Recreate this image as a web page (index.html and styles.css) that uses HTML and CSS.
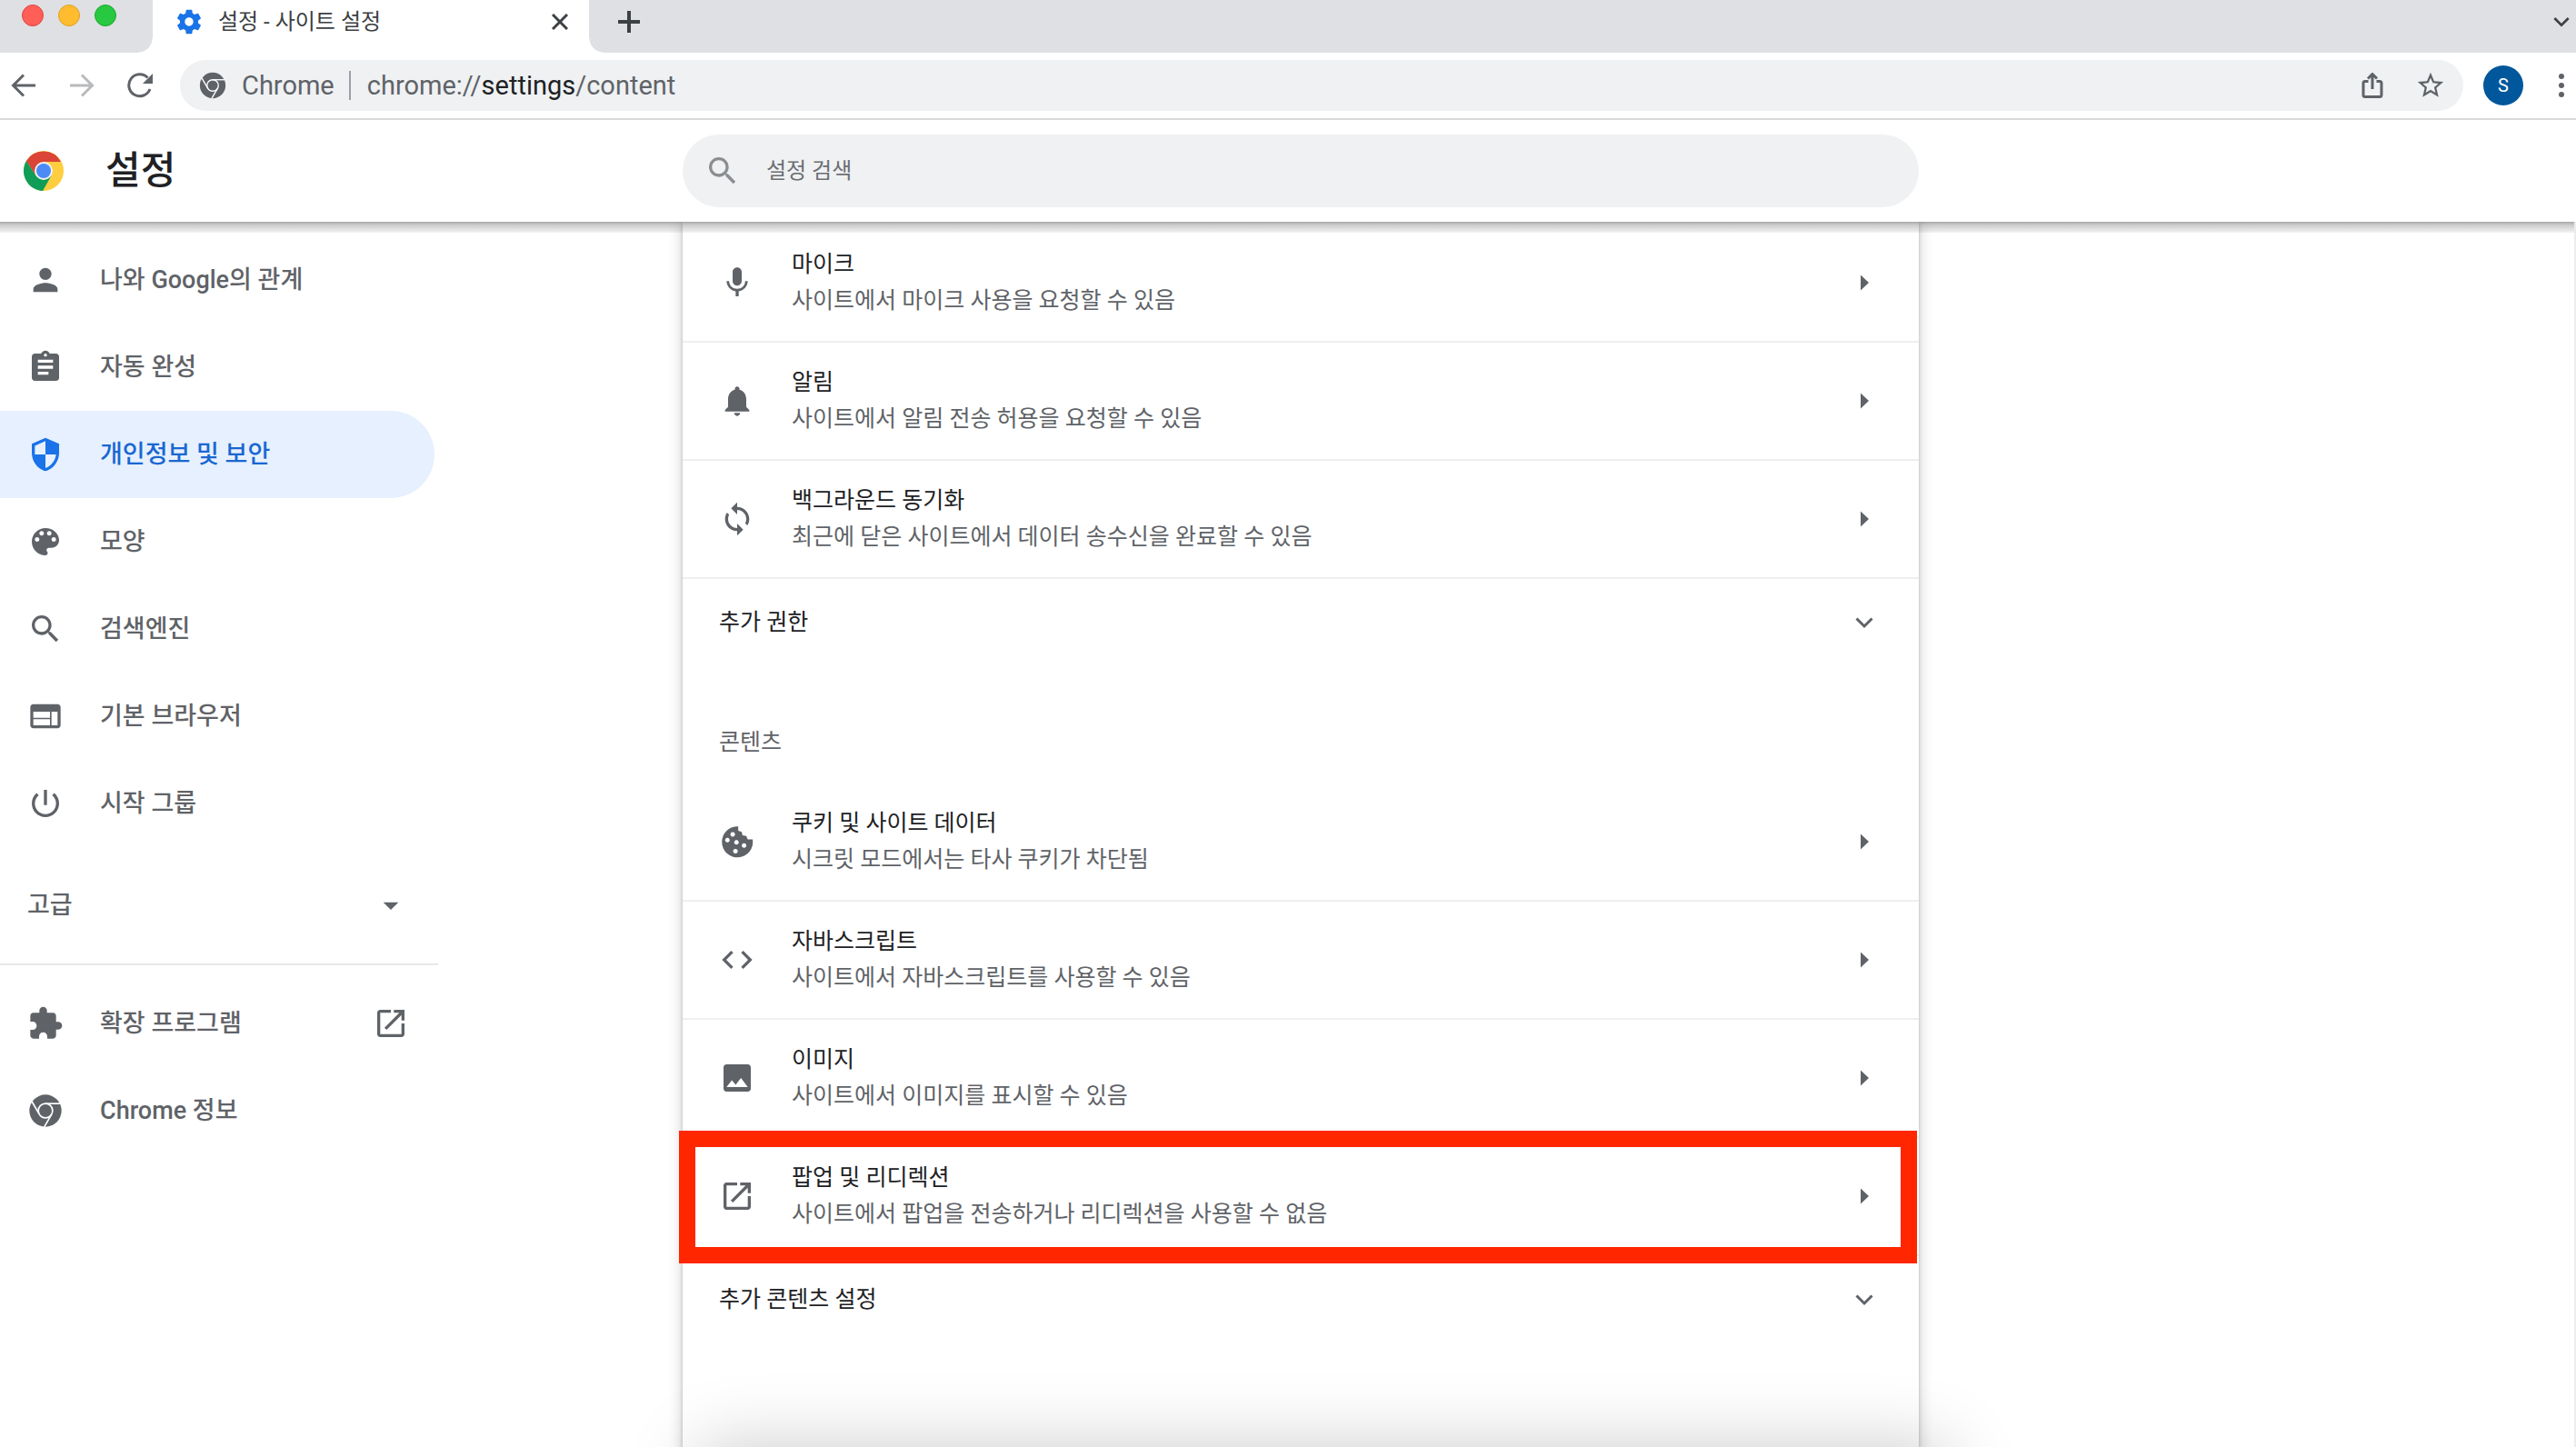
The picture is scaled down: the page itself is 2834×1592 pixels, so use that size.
FILE: index.html
```html
<!DOCTYPE html>
<html lang="ko">
<head>
<meta charset="utf-8">
<title>설정 - 사이트 설정</title>
<meta name="viewport" content="width=device-width, initial-scale=1">
<link rel="stylesheet" href="styles.css">
</head>
<body>
<svg class="sprite" aria-hidden="true">
  <symbol id="search" viewBox="0 0 24 24"><path d="M15.5 14h-.79l-.28-.27C15.41 12.59 16 11.11 16 9.5 16 5.91 13.09 3 9.5 3S3 5.91 3 9.5 5.91 16 9.5 16c1.61 0 3.09-.59 4.23-1.57l.27.28v.79l5 4.99L20.49 19l-4.99-5zm-6 0C7.01 14 5 11.99 5 9.5S7.01 5 9.5 5 14 7.01 14 9.5 11.99 14 9.5 14z"/></symbol>
  <symbol id="open" viewBox="0 0 24 24"><path d="M19 19H5V5h7V3H5c-1.11 0-2 .9-2 2v14c0 1.1.89 2 2 2h14c1.1 0 2-.9 2-2v-7h-2v7zM14 3v2h3.59l-9.83 9.83 1.41 1.41L19 6.41V10h2V3h-7z"/></symbol>
  <symbol id="chrome" viewBox="0 0 24 24">
    <circle cx="12" cy="12" r="10.6"/>
    <g fill="none" stroke="#fff" stroke-width="1">
      <circle cx="12" cy="12" r="4.7"/>
      <path d="M12 7.3h9.8"/>
      <path d="M12 7.3h9.8" transform="rotate(120 12 12)"/>
      <path d="M12 7.3h9.8" transform="rotate(240 12 12)"/>
    </g>
  </symbol>
  <symbol id="arrow" viewBox="0 0 20 20"><path d="M6 1.5v17l9-8.5z"/></symbol>
  <symbol id="chevron" viewBox="0 0 20 20"><path d="M1.5 5.5l8.5 8.5l8.5-8.5" fill="none" stroke="currentColor" stroke-width="3"/></symbol>
</svg>

<header class="browser">
  <div class="tabstrip">
    <div class="window-controls">
      <button class="light light-close" aria-label="닫기"></button>
      <button class="light light-min" aria-label="최소화"></button>
      <button class="light light-max" aria-label="최대화"></button>
    </div>
    <div class="tab">
      <svg class="tab-icon" viewBox="0 0 24 24"><path d="M19.43 12.98c.04-.32.07-.64.07-.98s-.03-.66-.07-.98l2.11-1.65c.19-.15.24-.42.12-.64l-2-3.46c-.12-.22-.39-.3-.61-.22l-2.49 1c-.52-.4-1.08-.73-1.69-.98l-.38-2.65C14.46 2.18 14.25 2 14 2h-4c-.25 0-.46.18-.49.42l-.38 2.65c-.61.25-1.17.59-1.69.98l-2.49-1c-.23-.09-.49 0-.61.22l-2 3.46c-.13.22-.07.49.12.64l2.11 1.65c-.04.32-.07.65-.07.98s.03.66.07.98l-2.11 1.65c-.19.15-.24.42-.12.64l2 3.46c.12.22.39.3.61.22l2.49-1c.52.4 1.08.73 1.69.98l.38 2.65c.03.24.24.42.49.42h4c.25 0 .46-.18.49-.42l.38-2.65c.61-.25 1.17-.59 1.69-.98l2.49 1c.23.09.49 0 .61-.22l2-3.46c.12-.22.07-.49-.12-.64l-2.11-1.65zM12 15.5c-1.93 0-3.5-1.57-3.5-3.5s1.57-3.5 3.5-3.5 3.5 1.57 3.5 3.5-1.57 3.5-3.5 3.5z"/></svg>
      <span class="tab-title">설정 - 사이트 설정</span>
      <button class="icon-button" aria-label="탭 닫기"><svg class="icon-s" viewBox="0 0 18 18"><path class="line" d="M1 1l16 16M17 1L1 17"/></svg></button>
    </div>
    <button class="icon-button new-tab" aria-label="새 탭"><svg class="icon-m" viewBox="0 0 24 24"><path class="line bold" d="M12 0v24M0 12h24"/></svg></button>
    <button class="icon-button tab-search" aria-label="탭 검색"><svg class="icon-s"><use href="#chevron"/></svg></button>
  </div>
  <div class="toolbar">
    <div class="nav-buttons">
      <button class="icon-button" aria-label="뒤로"><svg class="icon-l" viewBox="0 0 28 28"><path class="line" d="M27 14H3M14 2.5L2.5 14L14 25.5"/></svg></button>
      <button class="icon-button faded" aria-label="앞으로"><svg class="icon-l" viewBox="0 0 28 28"><path class="line" d="M1 14h24M14 2.5L25.5 14L14 25.5"/></svg></button>
      <button class="icon-button" aria-label="새로고침"><svg class="icon-l" viewBox="0 0 28 28"><path class="line" d="M25 18A12 12 0 1 1 22.5 5.5"/><path d="M28 1v11H17z"/></svg></button>
    </div>
    <div class="omnibox">
      <svg class="icon-xl"><use href="#chrome"/></svg>
      <span class="site-name">Chrome</span>
      <span class="url">chrome://<b>settings</b>/content</span>
      <button class="icon-button share" aria-label="공유"><svg class="icon-l" viewBox="0 0 28 28"><path class="line" d="M9.5 9.5H6Q4 9.5 4 11.5V24.5Q4 26.5 6 26.5H22Q24 26.5 24 24.5V11.5Q24 9.5 22 9.5H18.5M14 18V1.5M9 6.5l5-5l5 5"/></svg></button>
      <button class="icon-button" aria-label="북마크"><svg class="icon-star" viewBox="0 0 24 24"><path d="M22 9.24l-7.19-.62L12 2 9.19 8.63 2 9.24l5.46 4.73L5.82 21 12 17.27 18.18 21l-1.63-7.03L22 9.24zM12 15.4l-3.76 2.27 1-4.28-3.32-2.88 4.38-.38L12 6.1l1.71 4.04 4.38.38-3.32 2.88 1 4.28L12 15.4z"/></svg></button>
    </div>
    <button class="avatar">S</button>
    <button class="icon-button" aria-label="메뉴"><svg class="icon-l" viewBox="0 0 28 28"><circle cx="14" cy="4" r="3"/><circle cx="14" cy="14" r="3"/><circle cx="14" cy="24" r="3"/></svg></button>
  </div>
</header>

<div class="page-header">
  <div class="brand">
    <svg class="logo" viewBox="0 0 44 44">
      <circle cx="22" cy="22" r="22" fill="#ffcd40"/>
      <path fill="#db4437" d="M2.95 11A22 22 0 0 1 41.05 12H22L13.34 27Z"/>
      <path fill="#0f9d58" d="M2.95 11A22 22 0 0 0 21 44L30.66 27L22 32L13.34 27L2.95 11Z"/>
      <circle cx="22" cy="22" r="10" fill="#f1f1f1"/>
      <circle cx="22" cy="22" r="8" fill="#4c8bf5"/>
    </svg>
    <h1>설정</h1>
  </div>
  <label class="search">
    <svg class="icon-2x"><use href="#search"/></svg>
    <input type="search" placeholder="설정 검색" aria-label="설정 검색">
  </label>
</div>

<div class="page">
  <nav class="sidebar">
    <a class="nav-item" href="#people"><svg class="icon-2x" viewBox="0 0 24 24"><path d="M12 12c2.21 0 4-1.79 4-4s-1.79-4-4-4-4 1.79-4 4 1.79 4 4 4zm0 2c-2.67 0-8 1.34-8 4v2h16v-2c0-2.66-5.33-4-8-4z"/></svg>나와 Google의 관계</a>
    <a class="nav-item" href="#autofill"><svg class="icon-2x" viewBox="0 0 24 24"><path d="M19 3h-4.18C14.4 1.84 13.3 1 12 1c-1.3 0-2.4.84-2.82 2H5c-1.1 0-2 .9-2 2v14c0 1.1.9 2 2 2h14c1.1 0 2-.9 2-2V5c0-1.1-.9-2-2-2zm-7 0c.55 0 1 .45 1 1s-.45 1-1 1-1-.45-1-1 .45-1 1-1zm2 14H7v-2h7v2zm3-4H7v-2h10v2zm0-4H7V7h10v2z"/></svg>자동 완성</a>
    <a class="nav-item active" href="#privacy" aria-current="page"><svg class="icon-2x" viewBox="0 0 24 24"><path d="M12 1L3 5v6c0 5.55 3.84 10.74 9 12 5.16-1.26 9-6.45 9-12V5l-9-4zm0 10.99h7c-.53 4.12-3.28 7.79-7 8.94V12H5V6.3l7-3.11v8.8z"/></svg>개인정보 및 보안</a>
    <a class="nav-item" href="#appearance"><svg class="icon-2x" viewBox="0 0 24 24"><path d="M12 3c-4.97 0-9 4.03-9 9s4.03 9 9 9c.83 0 1.5-.67 1.5-1.5 0-.39-.15-.74-.39-1.01-.23-.26-.38-.61-.38-.99 0-.83.67-1.5 1.5-1.5H16c2.76 0 5-2.24 5-5 0-4.42-4.03-8-9-8zm-5.5 9c-.83 0-1.5-.67-1.5-1.5S5.67 9 6.5 9 8 9.67 8 10.5 7.33 12 6.5 12zm3-4C8.67 8 8 7.33 8 6.5S8.67 5 9.5 5s1.5.67 1.5 1.5S10.33 8 9.5 8zm5 0c-.83 0-1.5-.67-1.5-1.5S13.67 5 14.5 5s1.5.67 1.5 1.5S15.33 8 14.5 8zm3 4c-.83 0-1.5-.67-1.5-1.5S16.67 9 17.5 9s1.5.67 1.5 1.5-.67 1.5-1.5 1.5z"/></svg>모양</a>
    <a class="nav-item" href="#search-engine"><svg class="icon-2x"><use href="#search"/></svg>검색엔진</a>
    <a class="nav-item" href="#default-browser"><svg class="icon-2x" viewBox="0 0 24 24"><path d="M20 4H4c-1.1 0-1.99.9-1.99 2L2 18c0 1.1.9 2 2 2h16c1.1 0 2-.9 2-2V6c0-1.1-.9-2-2-2zm-5 14H4v-4h11v4zm0-5H4V9h11v4zm5 5h-4V9h4v9z"/></svg>기본 브라우저</a>
    <a class="nav-item" href="#on-startup"><svg class="icon-2x" viewBox="0 0 24 24"><path d="M13 3h-2v10h2V3zm4.83 2.17l-1.42 1.42C17.99 7.86 19 9.81 19 12c0 3.87-3.13 7-7 7s-7-3.13-7-7c0-2.19 1.01-4.14 2.58-5.42L6.17 5.17C4.23 6.82 3 9.26 3 12c0 4.97 4.03 9 9 9s9-4.03 9-9c0-2.74-1.23-5.18-3.17-6.83z"/></svg>시작 그룹</a>
    <button class="advanced">고급<svg class="icon-2x" viewBox="0 0 24 24"><path d="M7 10l5 5 5-5z"/></svg></button>
    <a class="nav-item" href="#extensions"><svg class="icon-2x" viewBox="0 0 24 24"><path d="M20.5 11H19V7c0-1.1-.9-2-2-2h-4V3.5C13 2.12 11.88 1 10.5 1S8 2.12 8 3.5V5H4c-1.1 0-1.99.9-1.99 2v3.8H3.5c1.49 0 2.7 1.21 2.7 2.7s-1.21 2.7-2.7 2.7H2V20c0 1.1.9 2 2 2h3.8v-1.5c0-1.49 1.21-2.7 2.7-2.7 1.49 0 2.7 1.21 2.7 2.7V22H17c1.1 0 2-.9 2-2v-4h1.5c1.38 0 2.5-1.12 2.5-2.5S21.88 11 20.5 11z"/></svg>확장 프로그램<svg class="icon-2x trailing"><use href="#open"/></svg></a>
    <a class="nav-item" href="#help"><svg class="icon-2x"><use href="#chrome"/></svg>Chrome 정보</a>
  </nav>

  <main class="card">
    <a class="row" href="#microphone">
      <svg class="icon-2x" viewBox="0 0 24 24"><path d="M12 14c1.66 0 2.99-1.34 2.99-3L15 5c0-1.66-1.34-3-3-3S9 3.34 9 5v6c0 1.66 1.34 3 3 3zm5.3-3c0 3-2.54 5.1-5.3 5.1S6.7 14 6.7 11H5c0 3.41 2.72 6.23 6 6.72V21h2v-3.28c3.28-.48 6-3.3 6-6.72h-1.7z"/></svg>
      <span class="row-text"><span class="row-title">마이크</span><span class="row-desc">사이트에서 마이크 사용을 요청할 수 있음</span></span>
      <svg class="row-end"><use href="#arrow"/></svg>
    </a>
    <a class="row" href="#notifications">
      <svg class="icon-2x" viewBox="0 0 24 24"><path d="M12 22c1.1 0 2-.9 2-2h-4c0 1.1.89 2 2 2zm6-6v-5c0-3.07-1.64-5.64-4.5-6.32V4c0-.83-.67-1.5-1.5-1.5s-1.5.67-1.5 1.5v.68C7.63 5.36 6 7.92 6 11v5l-2 2v1h16v-1l-2-2z"/></svg>
      <span class="row-text"><span class="row-title">알림</span><span class="row-desc">사이트에서 알림 전송 허용을 요청할 수 있음</span></span>
      <svg class="row-end"><use href="#arrow"/></svg>
    </a>
    <a class="row" href="#background-sync">
      <svg class="icon-2x" viewBox="0 0 24 24"><path d="M12 4V1L8 5l4 4V6c3.31 0 6 2.69 6 6 0 1.01-.25 1.97-.7 2.8l1.46 1.46C19.54 15.03 20 13.57 20 12c0-4.42-3.58-8-8-8zm0 14c-3.31 0-6-2.69-6-6 0-1.01.25-1.97.7-2.8L5.24 7.74C4.46 8.97 4 10.43 4 12c0 4.42 3.58 8 8 8v3l4-4-4-4v3z"/></svg>
      <span class="row-text"><span class="row-title">백그라운드 동기화</span><span class="row-desc">최근에 닫은 사이트에서 데이터 송수신을 완료할 수 있음</span></span>
      <svg class="row-end"><use href="#arrow"/></svg>
    </a>
    <button class="expander">추가 권한<svg class="row-end"><use href="#chevron"/></svg></button>

    <h2>콘텐츠</h2>
    <a class="row" href="#cookies">
      <svg class="icon-2x" viewBox="0 0 24 24"><path fill-rule="evenodd" d="M22.2 10.5A10.2 10.2 0 1 1 12.7 2V4.8L15 5.5L15.5 7.8L18 8.2L19 10.5zM9 5.7a1.5 1.5 0 1 0 .1 0zM5.5 9.5a1.5 1.5 0 1 0 .1 0zM11.5 11a1.5 1.5 0 1 0 .1 0zM16.5 13a1.5 1.5 0 1 0 .1 0zM10.8 16.8a1.5 1.5 0 1 0 .1 0z"/></svg>
      <span class="row-text"><span class="row-title">쿠키 및 사이트 데이터</span><span class="row-desc">시크릿 모드에서는 타사 쿠키가 차단됨</span></span>
      <svg class="row-end"><use href="#arrow"/></svg>
    </a>
    <a class="row" href="#javascript">
      <svg class="icon-2x" viewBox="0 0 24 24"><path d="M9.4 16.6L4.8 12l4.6-4.6L8 6l-6 6 6 6 1.4-1.4zm5.2 0l4.6-4.6-4.6-4.6L16 6l6 6-6 6-1.4-1.4z"/></svg>
      <span class="row-text"><span class="row-title">자바스크립트</span><span class="row-desc">사이트에서 자바스크립트를 사용할 수 있음</span></span>
      <svg class="row-end"><use href="#arrow"/></svg>
    </a>
    <a class="row" href="#images">
      <svg class="icon-2x" viewBox="0 0 24 24"><path d="M21 19V5c0-1.1-.9-2-2-2H5c-1.1 0-2 .9-2 2v14c0 1.1.9 2 2 2h14c1.1 0 2-.9 2-2zM8.5 13.5l2.5 3.01L14.5 12l4.5 6H5l3.5-4.5z"/></svg>
      <span class="row-text"><span class="row-title">이미지</span><span class="row-desc">사이트에서 이미지를 표시할 수 있음</span></span>
      <svg class="row-end"><use href="#arrow"/></svg>
    </a>
    <a class="row highlighted" href="#popups">
      <svg class="icon-2x"><use href="#open"/></svg>
      <span class="row-text"><span class="row-title">팝업 및 리디렉션</span><span class="row-desc">사이트에서 팝업을 전송하거나 리디렉션을 사용할 수 없음</span></span>
      <svg class="row-end"><use href="#arrow"/></svg>
    </a>
    <button class="expander">추가 콘텐츠 설정<svg class="row-end"><use href="#chevron"/></svg></button>
  </main>
</div>
</body>
</html>
```
FILE: styles.css
```css
:root {
  --ink: #202124;
  --muted: #5f6368;
  --field: #eff1f3;
  --rule: #efefef;
  --gutter: 751px;
}

* { box-sizing: border-box; }

body {
  display: flex;
  flex-direction: column;
  min-height: 100vh;
  margin: 0;
  background: #fff;
  color: var(--ink);
  font-family: Roboto, "Noto Sans CJK KR", sans-serif;
  font-size: 24px;
  line-height: 40px;
}

button, input { font: inherit; color: inherit; border: 0; background: none; padding: 0; margin: 0; }
a { color: inherit; text-decoration: none; }
svg { display: block; flex: none; fill: currentColor; }
.sprite { position: absolute; width: 0; height: 0; }
.line { fill: none; stroke: currentColor; stroke-width: 3; }
.bold { stroke-width: 4; }

.icon-s { width: 18px; height: 18px; }
.icon-m { width: 24px; height: 24px; }
.icon-l { width: 28px; height: 28px; }
.icon-xl { width: 32px; height: 32px; }
.icon-star { width: 34px; height: 34px; }
.icon-2x { width: 40px; height: 40px; }
.icon-button { display: flex; align-items: center; justify-content: center; }

/* Browser window */
.tabstrip {
  display: flex;
  height: 58px;
  padding-right: 7px;
  background: #dee0e4;
  color: #3c4043;
}
.window-controls { display: flex; gap: 16px; width: 168px; padding: 5px 0 0 24px; }
.light { width: 24px; height: 24px; border-radius: 50%; }
.light-close { background: #ff5f57; border: 1px solid #e0443e; }
.light-min { background: #febc2e; border: 1px solid #dfa023; }
.light-max { background: #28c840; border: 1px solid #1aab29; }

.tab {
  position: relative;
  display: flex;
  align-items: center;
  width: 480px;
  padding: 0 23px 10px 24px;
  background: #fff;
}
.tab::before, .tab::after {
  content: "";
  position: absolute;
  bottom: 0;
  width: 16px;
  height: 16px;
}
.tab::before { right: 100%; background: radial-gradient(circle at 0 0, transparent 15px, #fff 16px); }
.tab::after { left: 100%; background: radial-gradient(circle at 100% 0, transparent 15px, #fff 16px); }
.tab-icon { width: 32px; height: 32px; color: #1a73e8; }
.tab-title { flex: 1; padding-left: 16px; }
.new-tab { width: 88px; padding-bottom: 10px; }
.tab-search { margin-left: auto; padding-bottom: 10px; }

.toolbar {
  display: flex;
  align-items: center;
  height: 74px;
  padding: 0 2px 0 12px;
  border-bottom: 2px solid #dadada;
  color: var(--muted);
}
.nav-buttons { display: flex; gap: 36px; width: 186px; }
.faded { color: #b8babd; }
.omnibox {
  flex: 1;
  display: flex;
  align-items: center;
  height: 56px;
  padding: 0 19px 0 20px;
  border-radius: 28px;
  background: var(--field);
  font-size: 29px;
}
.site-name { margin-left: 16px; padding-right: 16px; border-right: 2px solid #9aa0a6; line-height: 32px; }
.url { flex: 1; padding-left: 18px; }
.url b { color: var(--ink); font-weight: 400; }
.share { margin-right: 33px; }
.avatar {
  width: 44px;
  height: 44px;
  margin: 0 28px 0 22px;
  border-radius: 50%;
  background: #01579b;
  color: #fff;
  font-size: 20px;
}

/* Settings header */
.page-header {
  position: relative;
  display: grid;
  grid-template-columns: var(--gutter) minmax(0, 1360px) 1fr;
  align-items: center;
  height: 112px;
}
.page-header::after {
  content: "";
  position: absolute;
  z-index: 1;
  top: 100%;
  left: 0;
  right: 2px;
  height: 12px;
  background: linear-gradient(rgba(0, 0, 0, 0.34), rgba(0, 0, 0, 0.2) 30%, rgba(0, 0, 0, 0.05));
}
.brand { display: flex; align-items: center; gap: 46px; padding-left: 26px; }
.logo { width: 44px; height: 44px; }
h1 { margin: 0; font-size: 42px; font-weight: 500; }
.search {
  display: flex;
  align-items: center;
  gap: 28px;
  height: 80px;
  padding: 0 24px;
  border-radius: 40px;
  background: var(--field);
  color: #8b8e91;
}
.search input { flex: 1; outline: 0; }
.search input::placeholder { color: #6b6e72; opacity: 1; }

/* Body columns */
.page {
  position: relative;
  flex: 1;
  display: grid;
  grid-template-columns: var(--gutter) minmax(0, 1360px) 1fr;
  border-right: 2px solid #ececec;
  overflow: hidden;
}
.page::after {
  content: "";
  position: absolute;
  top: 100%;
  left: 770px;
  right: 690px;
  height: 100px;
  box-shadow: 0 0 80px rgba(0, 0, 0, 0.21);
  pointer-events: none;
}

.sidebar { width: 482px; padding-top: 16px; color: var(--muted); font-size: 27px; font-weight: 500; }
.nav-item {
  display: flex;
  align-items: center;
  gap: 40px;
  width: 478px;
  height: 96px;
  padding: 0 28px 0 30px;
}
.trailing { margin-left: auto; }
.active { border-radius: 0 48px 48px 0; background: #e6f0fe; color: #1967d2; }
.active svg { color: #1a73e8; }
.advanced {
  display: flex;
  align-items: center;
  justify-content: space-between;
  width: 100%;
  height: 130px;
  margin-bottom: 16px;
  padding: 0 32px 0 30px;
  border-bottom: 2px solid #e8e8e8;
  font-weight: 500;
}

.card {
  padding-top: 3px;
  background: #fff;
  box-shadow: 0 2px 4px rgba(60, 64, 67, 0.3), 0 4px 12px 4px rgba(60, 64, 67, 0.15);
  font-size: 25px;
}
.row {
  position: relative;
  display: flex;
  align-items: center;
  gap: 40px;
  height: 130px;
  padding: 0 50px 0 40px;
  border-bottom: 2px solid var(--rule);
}
.row svg, .expander svg { color: var(--muted); }
.row-text { flex: 1; display: flex; flex-direction: column; }
.row-desc { color: var(--muted); }
.row-end { width: 20px; height: 20px; }
.expander {
  display: flex;
  align-items: center;
  justify-content: space-between;
  width: 100%;
  height: 96px;
  padding: 0 50px 0 40px;
}
h2 { margin: 0; padding: 64px 40px 25px; color: var(--muted); font-size: 25px; font-weight: 400; }

/* Callout frame around the row to look at */
.highlighted::after {
  content: "";
  position: absolute;
  inset: -8px 2px -10px -4px;
  border: 18px solid #ff2600;
  pointer-events: none;
}
```
